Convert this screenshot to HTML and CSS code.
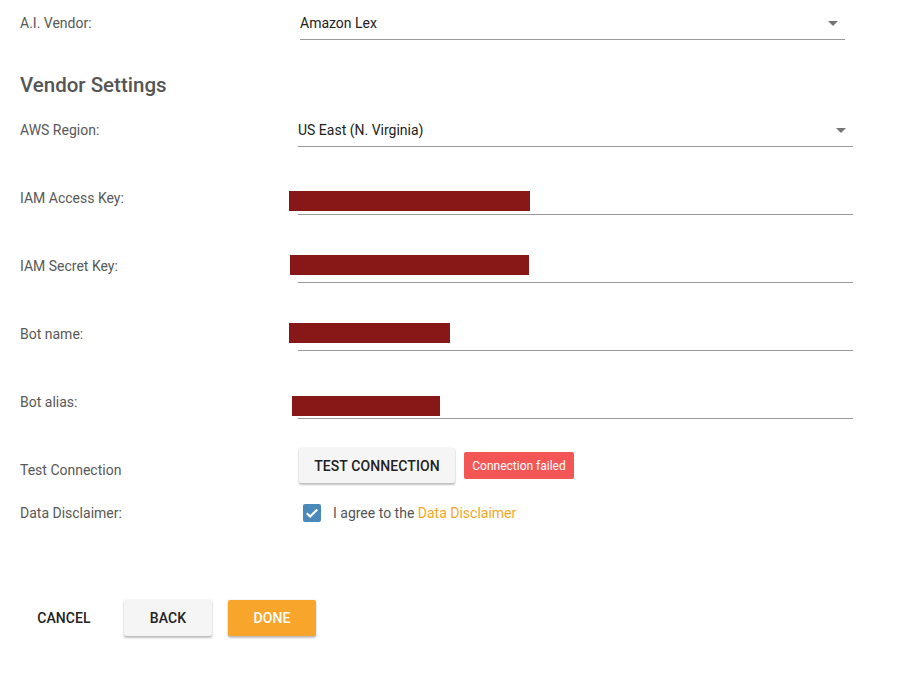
FILE: index.html
```html
<!DOCTYPE html>
<html>
<head>
<meta charset="utf-8">
<link rel="stylesheet" href="styles.css">
</head>
<body>
<div class="page">
  <div class="row row-first">
    <div class="label">A.I. Vendor:</div>
    <div class="field select vendor">
      <span class="value">Amazon Lex</span>
      <span class="arrow"></span>
    </div>
  </div>

  <h2 class="heading">Vendor Settings</h2>

  <div class="row">
    <div class="label">AWS Region:</div>
    <div class="field select">
      <span class="value">US East (N. Virginia)</span>
      <span class="arrow"></span>
    </div>
  </div>

  <div class="row">
    <div class="label">IAM Access Key:</div>
    <div class="field"><span class="redact r1"></span></div>
  </div>

  <div class="row">
    <div class="label">IAM Secret Key:</div>
    <div class="field"><span class="redact r2"></span></div>
  </div>

  <div class="row">
    <div class="label">Bot name:</div>
    <div class="field"><span class="redact r3"></span></div>
  </div>

  <div class="row">
    <div class="label">Bot alias:</div>
    <div class="field"><span class="redact r4"></span></div>
  </div>

  <div class="row row-test">
    <div class="label">Test Connection</div>
    <div class="test-actions">
      <button class="btn btn-raised btn-test">Test Connection</button>
      <span class="badge">Connection failed</span>
    </div>
  </div>

  <div class="row row-disclaimer">
    <div class="label">Data Disclaimer:</div>
    <label class="agree">
      <span class="checkbox">
        <svg viewBox="0 0 18 18" width="18" height="18"><path d="M3.8 9.2l3.4 3.3 7-7.1" fill="none" stroke="#fff" stroke-width="2.2"/></svg>
      </span>
      <span class="agree-text">I agree to the <a class="link">Data Disclaimer</a></span>
    </label>
  </div>

  <div class="footer">
    <button class="btn btn-flat">Cancel</button>
    <button class="btn btn-raised">Back</button>
    <button class="btn btn-raised btn-primary">Done</button>
  </div>
</div>
</body>
</html>
```

FILE: styles.css
```css
* { box-sizing: border-box; }
html, body { margin: 0; padding: 0; background: #fff; }
body {
  font-family: Roboto, "Liberation Sans", Arial, sans-serif;
  color: #222;
  width: 917px;
  height: 673px;
  overflow: hidden;
}
.page { padding: 0 0 0 20px; }

.row {
  display: grid;
  grid-template-columns: 278px 555px;
  align-items: center;
  height: 68px;
}
.row-first { height: 46px; }

.label {
  font-size: 14px;
  color: #585858;
  line-height: 16px;
}

.heading {
  margin: 28px 0 0 0;
  height: 22px;
  line-height: 22px;
  font-size: 20.5px;
  font-weight: 500;
  color: #555;
}

.field {
  position: relative;
  height: 33px;
  border-bottom: 1px solid #9a9a9a;
  display: flex;
  align-items: center;
  padding-top: 1px;
}
.vendor { margin-left: 2px; width: 545px; }
.value { font-size: 14px; color: #222; }
.arrow {
  margin-left: auto;
  margin-right: 7px;
  width: 0; height: 0;
  border-left: 5px solid transparent;
  border-right: 5px solid transparent;
  border-top: 5px solid #757575;
}

.redact {
  position: absolute;
  height: 20px;
  background: #881818;
}
.r1 { left: -9px; top: 9px; width: 241px; }
.r2 { left: -8px; top: 5px; width: 239px; }
.r3 { left: -9px; top: 5px; width: 161px; }
.r4 { left: -6px; top: 10px; width: 148px; }

.btn {
  font-family: Roboto, "Liberation Sans", Arial, sans-serif;
  font-size: 14px;
  font-weight: 500;
  text-transform: uppercase;
  color: #222;
  border: 0;
  border-radius: 2px;
  height: 36px;
  min-width: 88px;
  padding: 0 16px;
  background: transparent;
  letter-spacing: 0.1px;
}
.btn-raised {
  background: #f5f5f5;
  box-shadow: 0 2px 2px rgba(0,0,0,0.24), 0 0 2px rgba(0,0,0,0.12);
}
.btn-primary { background: #f8a62b; color: #fff; }

.row-test { height: 68px; }
.test-actions {
  display: flex;
  align-items: center;
  gap: 9px;
  margin-left: 1px;
  margin-bottom: 9px;
}
.btn-test { width: 156px; height: 35px; padding: 0; }
.badge {
  display: inline-flex;
  align-items: center;
  justify-content: center;
  width: 110px;
  height: 27px;
  background: #f45555;
  color: #fff;
  font-size: 12px;
  border-radius: 2px;
}

.row-disclaimer { height: 18px; }
.agree {
  display: flex;
  align-items: center;
  margin-left: 5px;
}
.checkbox {
  width: 18px;
  height: 18px;
  border-radius: 2px;
  background: #4a89b9;
  display: block;
}
.checkbox svg { display: block; }
.agree-text {
  margin-left: 12px;
  font-size: 14px;
  color: #555;
}
.link { color: #f6a623; }

.footer {
  display: flex;
  gap: 16px;
  margin-top: 78px;
}
```
